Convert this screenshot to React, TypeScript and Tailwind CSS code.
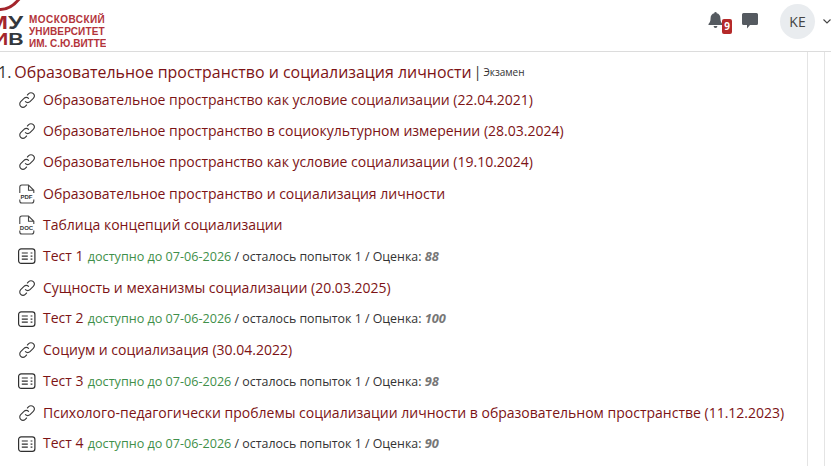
import React from "react";

const F = "font-['Open_Sans','Noto_Sans',sans-serif]";

function LinkIcon() {
  return (
    <svg width="20" height="20" viewBox="0 0 20 20" fill="none" stroke="#3c3c3c" strokeWidth="1.1" strokeLinecap="round" className="shrink-0">
      <path d="M8.400 11.600a3.200 3.200 0 0 0 4.600 0l3.300-3.300a3.200 3.200 0 0 0-4.600-4.600L10.400 5" />
      <path d="M11.600 8.400a3.200 3.200 0 0 0-4.600 0l-3.300 3.300a3.200 3.200 0 0 0 4.600 4.600l1.300-1.300" />
    </svg>
  );
}

function FileIcon({ label }: { label: string }) {
  return (
    <svg width="20" height="20" viewBox="0 0 20 20" fill="none" className="shrink-0">
      <path d="M2.800 9V3a2 2 0 0 1 2-2h6.700l5.300 5.300V9M16.800 15.500v1.500a2 2 0 0 1-2 2h-10a2 2 0 0 1-2-2v-1.500M11.500 1v5.300h5.300" stroke="#444" strokeWidth="1.1" />
      <text x="9.500" y="14.800" textAnchor="middle" fontSize="6" fontWeight="800" fill="#333" fontFamily="Liberation Sans">{label}</text>
    </svg>
  );
}

function QuizIcon() {
  return (
    <svg width="20" height="20" viewBox="0 0 20 20" fill="none" stroke="#2f2f2f" strokeWidth="1.2" className="shrink-0">
      <rect x="1.600" y="2.800" width="16.300" height="14.600" rx="2.600" />
      <path d="M4.800 7h6M4.800 10.100h6M4.800 13.200h6M13.600 7h1.800M13.600 10.100h1.800M13.600 13.200h1.800" />
    </svg>
  );
}

function Row({ icon, children }: { icon: React.ReactNode; children: React.ReactNode }) {
  return (
    <div className="flex items-center h-[31.27px] pl-[17px] gap-[6px] whitespace-nowrap">
      {icon}
      <div className="text-[14px] leading-[20px]">{children}</div>
    </div>
  );
}

function A({ children }: { children: React.ReactNode }) {
  return <span className="text-[#7d1315]">{children}</span>;
}

function Quiz({ n, score }: { n: number; score: number }) {
  return (
    <Row icon={<QuizIcon />}>
      <A>Тест {n}</A>
      <span className="ml-[1px] text-[12.6px] text-[#3f8f4a]"> доступно до 07-06-2026</span>
      <span className="text-[12.4px] text-[#333]"> / осталось попыток 1 / Оценка: </span>
      <span className="text-[12.8px] text-[#777] italic font-bold">{score}</span>
    </Row>
  );
}

export default function App() {
  return (
    <div className={`${F} w-[831px] h-[466px] overflow-hidden bg-white flex flex-col`}>
      <header className="h-[52px] shrink-0 border-b border-[#dcdcdc] flex items-center overflow-hidden">
        <div className="w-[106px] h-full relative shrink-0 overflow-hidden font-['Liberation_Sans',sans-serif]">
          <svg width="30" height="20" viewBox="0 0 30 20" className="absolute left-0 top-0">
            <path d="M-4 9 Q9 12 20 -2" stroke="#a3252c" strokeWidth="3" fill="none" />
          </svg>
          <div className="absolute right-[83px] top-[14px] text-[18px] leading-[19px] font-bold origin-right scale-x-[1.35] text-[#a3252c]">
            М<span className="text-[#33383d]">У</span>
          </div>
          <div className="absolute right-[83px] top-[31px] text-[17px] leading-[18px] font-bold origin-right scale-x-[1.25] text-[#a3252c]">
            И<span className="text-[#33383d]">В</span>
          </div>
          <div className="absolute left-[29px] top-[14px] whitespace-nowrap text-[10px] leading-[12px] font-bold text-[#b3343b]">
            <div className="tracking-[0.45px]">МОСКОВСКИЙ</div>
            <div className="tracking-[0.13px]">УНИВЕРСИТЕТ</div>
            <div>ИМ. С.Ю.ВИТТЕ</div>
          </div>
        </div>
        <div className="ml-auto flex items-center mb-[8px]">
          <div className="relative w-[20px] h-[20px]">
            <svg width="15" height="16" viewBox="0 0 15 16" className="absolute left-0 top-0" fill="#555a60">
              <path d="M7.500 0a1.200 1.200 0 0 1 1.200 1.300C11 1.800 12.400 3.600 12.400 6c0 3.600.9 4.600 2.100 6v1H.5v-1c1.200-1.400 2.100-2.400 2.100-6 0-2.400 1.400-4.200 3.700-4.700A1.200 1.200 0 0 1 7.500 0zM5.600 14h3.800a1.900 1.900 0 0 1-3.800 0z" />
            </svg>
            <span className="absolute left-[14px] top-[7px] w-[10px] h-[15px] rounded-[2px] bg-[#b52a2a] text-white text-[10px] leading-[15px] font-bold text-center">9</span>
          </div>
          <svg width="16" height="16" viewBox="0 0 16 16" className="ml-[14px] mb-[2px]" fill="#555a60">
            <path d="M1.500 0h13A1.500 1.500 0 0 1 16 1.500v9a1.500 1.500 0 0 1-1.500 1.500H8l-3 3.500V12H1.500A1.500 1.500 0 0 1 0 10.500v-9A1.500 1.500 0 0 1 1.500 0z" />
          </svg>
          <div className="ml-[22px] w-[35px] h-[35px] rounded-full bg-[#e9ecef] flex items-center justify-center text-[14px] text-[#444]">KE</div>
          <svg width="8" height="5" viewBox="0 0 8 5" className="ml-[8px]" fill="none" stroke="#444" strokeWidth="1.1">
            <path d="M.5.500 4 4 7.500.500" />
          </svg>
        </div>
      </header>
      <div className="flex-1 flex min-h-0">
        <main className="w-[808px] border-r border-[#e4e4e4] pt-[9px] overflow-hidden">
          <div className="h-[22px] flex items-center whitespace-nowrap leading-[22px] mb-[1.34px] -ml-[2px]">
            <span className="text-[16px] text-[#333] mr-[3px]">1.</span>
            <span className="text-[15.93px] text-[#7d1315]">Образовательное пространство и социализация личности</span>
            <span className="text-[14px] text-[#333] mx-[2px]">|</span>
            <span className="text-[10px] text-[#333]">Экзамен</span>
          </div>
          <Row icon={<LinkIcon />}><A>Образовательное пространство как условие социализации (22.04.2021)</A></Row>
          <Row icon={<LinkIcon />}><A>Образовательное пространство в социокультурном измерении (28.03.2024)</A></Row>
          <Row icon={<LinkIcon />}><A>Образовательное пространство как условие социализации (19.10.2024)</A></Row>
          <Row icon={<FileIcon label="PDF" />}><A>Образовательное пространство и социализация личности</A></Row>
          <Row icon={<FileIcon label="DOC" />}><A>Таблица концепций социализации</A></Row>
          <Quiz n={1} score={88} />
          <Row icon={<LinkIcon />}><A>Сущность и механизмы социализации (20.03.2025)</A></Row>
          <Quiz n={2} score={100} />
          <Row icon={<LinkIcon />}><A>Социум и социализация (30.04.2022)</A></Row>
          <Quiz n={3} score={98} />
          <Row icon={<LinkIcon />}><A>Психолого-педагогически проблемы социализации личности в образовательном пространстве (11.12.2023)</A></Row>
          <Quiz n={4} score={90} />
        </main>
        <div className="w-[17px] border-r border-[#e4e4e4]" />
      </div>
    </div>
  );
}
